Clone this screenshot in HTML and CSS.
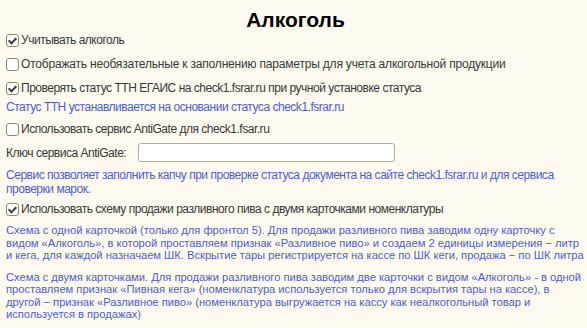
FILE: index.html
```html
<!DOCTYPE html>
<html lang="ru">
<head>
<meta charset="utf-8">
<link rel="stylesheet" href="styles.css">
</head>
<body>
<div class="page">
  <h1 class="title">Алкоголь</h1>
  <label class="check row-1"><span class="box checked"></span><span>Учитывать алкоголь</span></label>
  <label class="check row-2"><span class="box"></span><span class="wide">Отображать необязательные к заполнению параметры для учета алкогольной продукции</span></label>
  <label class="check row-3"><span class="box checked"></span><span>Проверять статус ТТН ЕГАИС на check1.fsrar.ru при ручной установке статуса</span></label>
  <p class="note note-1">Статус ТТН устанавливается на основании статуса check1.fsrar.ru</p>
  <label class="check row-4"><span class="box"></span><span>Использовать сервис AntiGate для check1.fsar.ru</span></label>
  <div class="field">
    <span class="field-label">Ключ сервиса AntiGate:</span>
    <span class="input"></span>
  </div>
  <p class="note note-2">Сервис позволяет заполнить капчу при проверке статуса документа на сайте check1.fsrar.ru и для сервиса<br>проверки марок.</p>
  <label class="check row-5"><span class="box checked"></span><span>Использовать схему продажи разливного пива с двумя карточками номенклатуры</span></label>
  <p class="note para para-1">Схема с одной карточкой (только для фронтол 5). Для продажи разливного пива заводим одну карточку с<br>видом «Алкоголь», в которой проставляем признак «Разливное пиво» и создаем 2 единицы измерения − литр<br>и кега, для каждой назначаем ШК. Вскрытие тары регистрируется на кассе по ШК кеги, продажа − по ШК литра</p>
  <p class="note para para-2">Схема с двумя карточками. Для продажи разливного пива заводим две карточки с видом «Алкоголь» - в одной<br>проставляем признак «Пивная кега» (номенклатура используется только для вскрытия тары на кассе), в<br>другой − признак «Разливное пиво» (номенклатура выгружается на кассу как неалкогольный товар и<br>используется в продажах)</p>
</div>
</body>
</html>
```

FILE: styles.css
```css
html, body {
  margin: 0;
  padding: 0;
  background: #fffaf0;
}
body {
  font-family: "Liberation Sans", Arial, sans-serif;
  font-size: 12px;
  letter-spacing: -0.48px;
  color: #383838;
}
.page {
  width: 587px;
  height: 328px;
  box-sizing: border-box;
  padding: 8px 2px 0 6px;
  display: flex;
  flex-direction: column;
  overflow: hidden;
}
.title {
  margin: 0;
  font-size: 21px;
  letter-spacing: 0;
  font-weight: bold;
  color: #000;
  text-align: center;
  line-height: 23px;
}
.check {
  display: flex;
  align-items: center;
  gap: 2px;
  height: 14px;
  line-height: 14px;
}
.wide { letter-spacing: -0.19px; }
.row-1 { margin-top: 2px; }
.row-2 { margin-top: 10px; }
.row-3 { margin-top: 10px; }
.row-4 { margin-top: 8px; }
.row-5 { margin-top: 6px; }
.box {
  width: 11px;
  height: 11px;
  border: 1px solid #8f8872;
  border-radius: 3px;
  background: #fff;
  position: relative;
  flex: none;
}
.box.checked::after {
  content: "";
  position: absolute;
  left: 3px;
  top: 1px;
  width: 3px;
  height: 6px;
  border: solid #3a3a3a;
  border-width: 0 2px 2px 0;
  transform: rotate(45deg);
}
.note {
  margin: 0;
  color: #4b5ed2;
  line-height: 14px;
  white-space: nowrap;
}
.note-1 { margin-top: 5px; }
.note-2 { margin-top: 6px; }
.field {
  display: flex;
  align-items: center;
  margin-top: 7px;
  height: 19px;
}
.field-label {
  width: 132px;
  flex: none;
}
.input {
  width: 255px;
  height: 17px;
  border: 1px solid #b8ad8e;
  border-radius: 3px;
  background: #fff;
}
.para {
  line-height: 12.5px;
  font-size: 11.2px;
  letter-spacing: -0.02px;
}
.para-1 { margin-top: 8px; }
.para-2 { margin-top: 9px; }
```
